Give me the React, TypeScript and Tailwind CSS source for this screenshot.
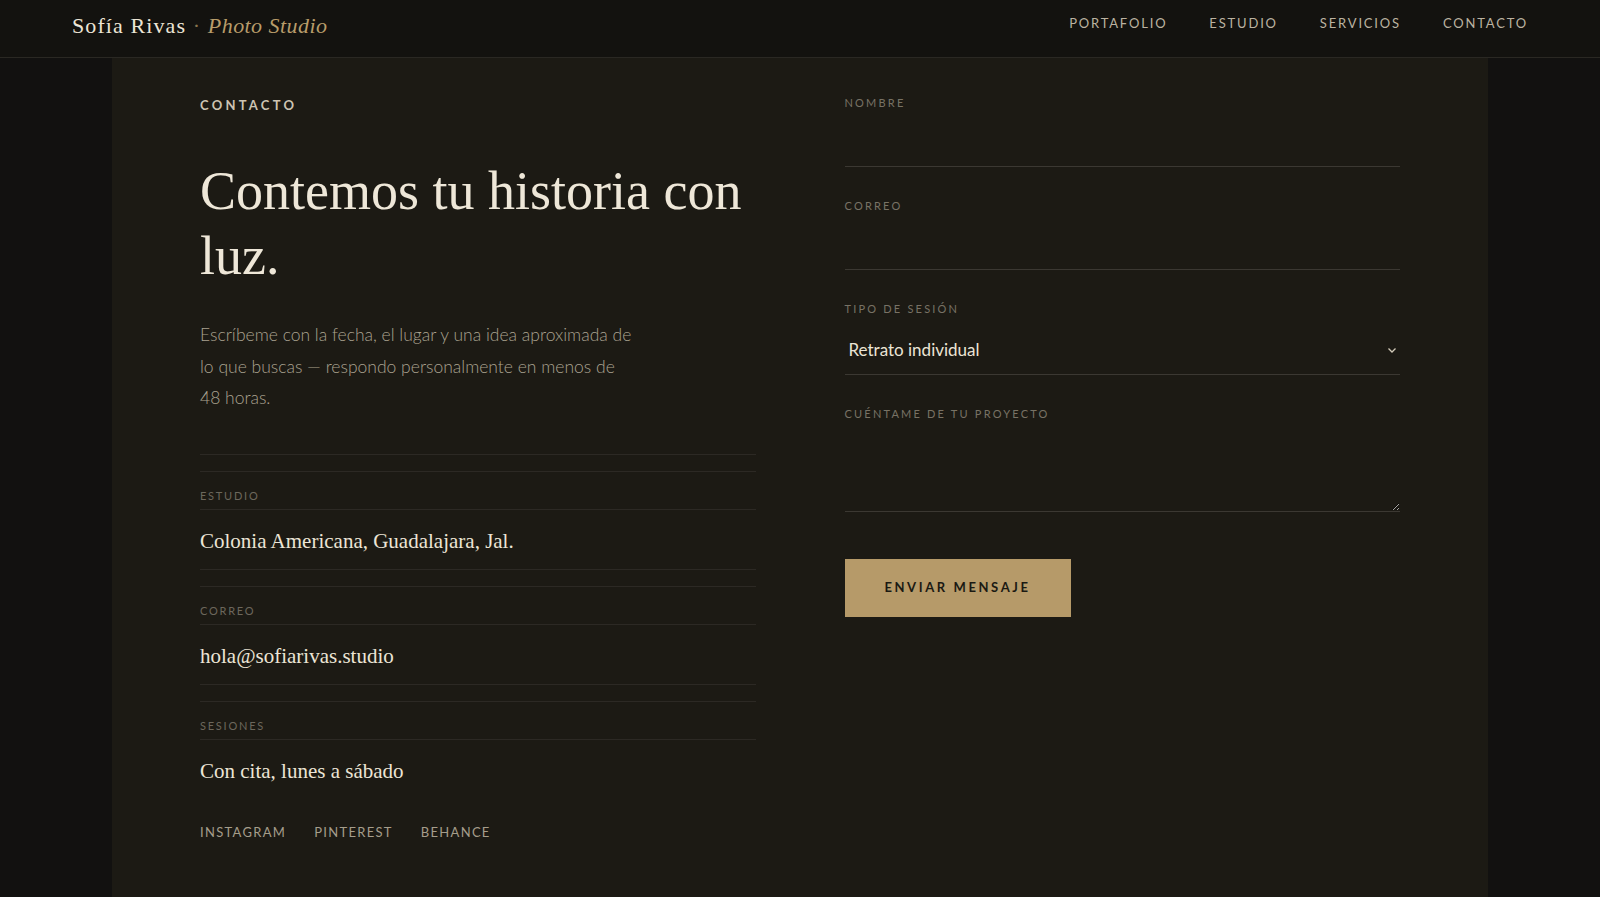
import React from "react";

const serif = "font-['Liberation_Serif',_'Times_New_Roman',_serif]";
const sans = "font-['Lato',_'Open_Sans',_sans-serif]";

const navItems = ["PORTAFOLIO", "ESTUDIO", "SERVICIOS", "CONTACTO"];

const details = [
  { label: "ESTUDIO", value: "Colonia Americana, Guadalajara, Jal." },
  { label: "CORREO", value: "hola@sofiarivas.studio" },
  { label: "SESIONES", value: "Con cita, lunes a sábado" },
];

function Header() {
  return (
    <header className="flex h-[58px] items-start justify-between border-b border-[#2a2823] bg-[#13120f] px-[72px] pt-[11px]">
      <a className={`${serif} text-[22px] leading-[29px] tracking-[0.05em] text-[#ece5d6]`}>
        Sofía Rivas <span className="text-[#8c7650]">·</span>{" "}
        <span className="italic tracking-[0.02em] text-[#b89c6a]">Photo Studio</span>
      </a>
      <nav className={`${sans} mt-[4px] flex gap-[42px] text-[13px] leading-[17px] tracking-[0.14em] text-[#bbb2a1]`}>
        {navItems.map((n) => (
          <a key={n}>{n}</a>
        ))}
      </nav>
    </header>
  );
}

function InfoList() {
  return (
    <div className="mt-[40px] border-t border-[#2c2924]">
      {details.map((d, i) => (
        <div key={d.label} className="mt-[16px] border-t border-[#2c2924]">
          <div
            className={`${sans} border-b border-[#2c2924] pt-[18px] pb-[7px] text-[11px] leading-[12px] tracking-[0.16em] text-[#6c675c]`}
          >
            {d.label}
          </div>
          <div
            className={`${serif} pt-[16px] pb-[13px] text-[21px] leading-[30px] text-[#ece5d6] ${
              i < details.length - 1 ? "border-b border-[#2c2924]" : ""
            }`}
          >
            {d.value}
          </div>
        </div>
      ))}
    </div>
  );
}

function Field({ label, children }: { label: string; children: React.ReactNode }) {
  return (
    <label className="flex flex-col">
      <span className={`${sans} text-[11px] leading-[16px] tracking-[0.2em] text-[#787265]`}>{label}</span>
      {children}
    </label>
  );
}

function ContactForm() {
  const line = "border-b border-[#3b3832] bg-transparent outline-none";
  return (
    <form className="flex flex-col gap-[31px]" onSubmit={(e) => e.preventDefault()}>
      <Field label="NOMBRE">
        <input className={`${line} ${sans} mt-[10px] h-[46px] px-[4px] text-[17px] text-[#ebe4d5]`} />
      </Field>
      <Field label="CORREO">
        <input type="email" className={`${line} ${sans} mt-[10px] h-[46px] px-[4px] text-[17px] text-[#ebe4d5]`} />
      </Field>
      <Field label="TIPO DE SESIÓN">
        <div className="relative mt-[8px]">
          <select
            defaultValue="Retrato individual"
            className={`${line} ${sans} h-[50px] w-full appearance-none pl-[4px] text-[17px] text-[#ebe4d5]`}
          >
            <option>Retrato individual</option>
            <option>Pareja</option>
            <option>Familia</option>
            <option>Marca personal</option>
          </select>
          <svg
            className="pointer-events-none absolute right-[3px] top-[21px] h-[8px] w-[10px]"
            viewBox="0 0 10 8"
            fill="none"
            stroke="#d2cab9"
            strokeWidth="1.3"
          >
            <path d="M1.5 2.5 5 6l3.5-3.5" />
          </svg>
        </div>
      </Field>
      <Field label="CUÉNTAME DE TU PROYECTO">
        <textarea className={`${line} ${sans} mt-[10px] h-[80px] resize-y px-[4px] text-[17px] text-[#ebe4d5]`} />
      </Field>
      <button
        type="submit"
        className={`${sans} mt-[16px] h-[58px] w-[226px] bg-[#b69a69] text-[13px] font-bold tracking-[0.2em] text-[#1b1913]`}
      >
        ENVIAR MENSAJE
      </button>
    </form>
  );
}

export default function App() {
  return (
    <div className="min-h-screen bg-[#121110] [color-scheme:dark]">
      <Header />
      <main className="mx-[112px] min-h-[839px] bg-[#1c1a14] px-[88px] pt-[37px]">
        <div className="grid grid-cols-2 gap-x-[89px]">
          <section>
            <p className={`${sans} text-[13px] font-bold leading-[20px] tracking-[0.25em] text-[#cdc4b2]`}>CONTACTO</p>
            <h1 className={`${serif} mt-[44px] text-[54px] font-normal leading-[65px] text-[#eee7d8]`}>
              Contemos tu historia con luz.
            </h1>
            <p className={`${sans} mt-[30px] max-w-[480px] text-[17.5px] font-light leading-[31.5px] text-[#aaa290]`}>
              Escríbeme con la fecha, el lugar y una idea aproximada de
              <br />
              lo que buscas — respondo personalmente en menos de
              <br />
              48 horas.
            </p>
            <InfoList />
            <div className={`${sans} mt-[24px] flex gap-[28px] text-[13px] leading-[18px] tracking-[0.1em] text-[#a59d8b]`}>
              <a>INSTAGRAM</a>
              <a>PINTEREST</a>
              <a>BEHANCE</a>
            </div>
          </section>
          <section>
            <ContactForm />
          </section>
        </div>
      </main>
    </div>
  );
}
